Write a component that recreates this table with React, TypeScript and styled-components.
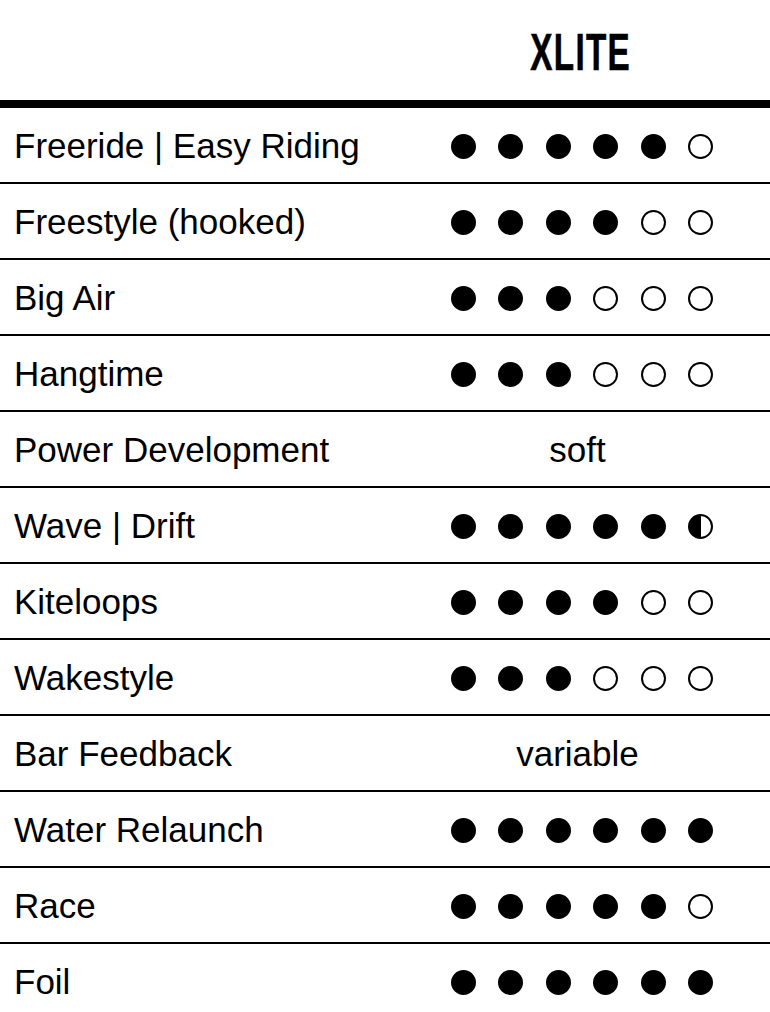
import React from "react";
import styled, { createGlobalStyle } from "styled-components";

const Global = createGlobalStyle`
  html, body { margin: 0; padding: 0; background: #fff; }
  body { font-family: "Liberation Sans", Arial, sans-serif; color: #000; }
`;

const Table = styled.div`
  width: 770px;
  display: flex;
  flex-direction: column;
`;

const Header = styled.div`
  display: grid;
  grid-template-columns: 1fr 1fr;
  height: 100px;
  border-bottom: 8px solid #000;
`;

const HeaderCell = styled.div`
  display: flex;
  align-items: center;
  justify-content: center;
  padding-left: 6px;
  padding-top: 4px;
`;

const Title = styled.span`
  display: inline-block;
  font-family: "Liberation Sans", Arial, sans-serif;
  font-weight: 700;
  font-size: 52px;
  line-height: 1;
  letter-spacing: 2px;
  transform: scaleX(0.64);
  -webkit-text-stroke: 0.6px #000;
`;

const Row = styled.div`
  display: grid;
  grid-template-columns: 1fr 1fr;
  height: 74px;
  border-bottom: 2px solid #000;
  &:last-child { border-bottom: none; }
`;

const Label = styled.div`
  display: flex;
  align-items: center;
  padding-left: 14px;
  padding-top: 2px;
  font-size: 35px;
  white-space: nowrap;
`;

const Value = styled.div`
  display: flex;
  align-items: center;
  justify-content: center;
  padding-top: 2px;
  font-size: 35px;
`;

const Dots = styled.div`
  display: flex;
  gap: 22.4px;
  padding-left: 9px;
`;

type Kind = "full" | "empty" | "half";

const Dot = styled.span<{ $kind: Kind }>`
  width: 25px;
  height: 25px;
  box-sizing: border-box;
  border-radius: 50%;
  border: 2.7px solid #000;
  background: ${(p) =>
    p.$kind === "full"
      ? "#000"
      : p.$kind === "half"
      ? "linear-gradient(to right, #000 50%, #fff 50%)"
      : "#fff"};
`;

type RowData = { label: string; value: number | string };

const rows: RowData[] = [
  { label: "Freeride | Easy Riding", value: 5 },
  { label: "Freestyle (hooked)", value: 4 },
  { label: "Big Air", value: 3 },
  { label: "Hangtime", value: 3 },
  { label: "Power Development", value: "soft" },
  { label: "Wave | Drift", value: 5.5 },
  { label: "Kiteloops", value: 4 },
  { label: "Wakestyle", value: 3 },
  { label: "Bar Feedback", value: "variable" },
  { label: "Water Relaunch", value: 6 },
  { label: "Race", value: 5 },
  { label: "Foil", value: 6 },
];

const Rating = ({ score }: { score: number }) => (
  <Dots>
    {Array.from({ length: 6 }, (_, i) => {
      const kind: Kind =
        score >= i + 1 ? "full" : score > i ? "half" : "empty";
      return <Dot key={i} $kind={kind} />;
    })}
  </Dots>
);

export default function App() {
  return (
    <>
      <Global />
      <Table>
        <Header>
          <div />
          <HeaderCell>
            <Title>XLITE</Title>
          </HeaderCell>
        </Header>
        {rows.map((r) => (
          <Row key={r.label}>
            <Label>{r.label}</Label>
            <Value>
              {typeof r.value === "number" ? <Rating score={r.value} /> : r.value}
            </Value>
          </Row>
        ))}
      </Table>
    </>
  );
}
